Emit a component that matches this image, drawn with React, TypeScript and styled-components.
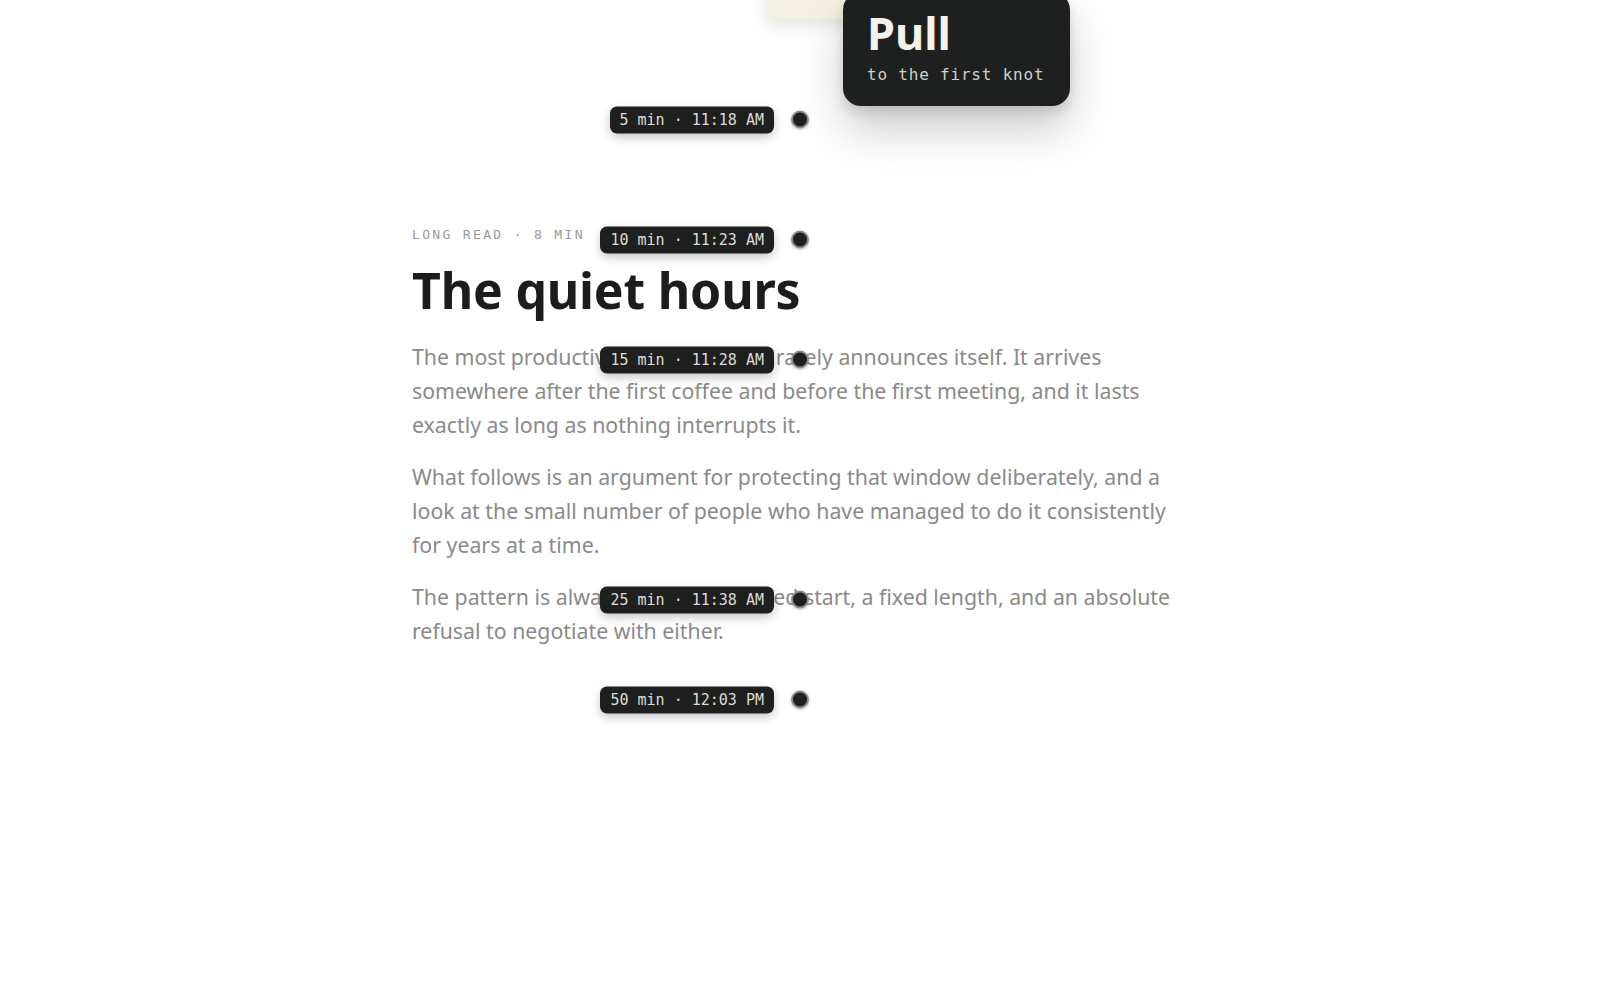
import React, { FC } from 'react'
import styled, { createGlobalStyle } from 'styled-components'

const GlobalStyle = createGlobalStyle`
  html, body {
    margin: 0;
    padding: 0;
    background: #ffffff;
  }
  body {
    font-family: "Noto Sans", "Open Sans", sans-serif;
    -webkit-font-smoothing: antialiased;
  }
`

const mono = `"DejaVu Sans Mono", "Liberation Mono", monospace`

const Page = styled.div`
  position: relative;
  width: 776px;
  min-height: 1000px;
  margin: 0 auto;
`

const Article = styled.article`
  width: 776px;
  padding-top: 225px;
`

const Kicker = styled.div`
  font-family: ${mono};
  font-size: 13px;
  line-height: 20px;
  letter-spacing: 0.18em;
  color: #9a9a9a;
  text-transform: uppercase;
`

const Title = styled.h1`
  margin: 18px 0 0;
  font-size: 50px;
  line-height: 55px;
  font-weight: 700;
  letter-spacing: -0.2px;
  color: #1b1c1b;
`

const Para = styled.p`
  margin: 22px 0 0;
  font-size: 21.3px;
  line-height: 34px;
  color: #8a8a8a;
  & + & {
    margin-top: 18px;
  }
`

// cream tab peeking out from behind the card
const Handle = styled.div`
  position: absolute;
  left: 354px;
  top: -20px;
  width: 100px;
  height: 39px;
  border-radius: 10px;
  background: #f4f1e4;
  box-shadow: 0 6px 18px rgba(0, 0, 0, 0.12);
  z-index: 1;
`

const PullCard = styled.div`
  position: absolute;
  left: 431px;
  top: -8px;
  width: 227px;
  height: 114px;
  box-sizing: border-box;
  padding: 18px 24px 0;
  border-radius: 18px;
  background: #1e201f;
  box-shadow: 0 24px 44px rgba(0, 0, 0, 0.2), 0 6px 12px rgba(0, 0, 0, 0.12);
  z-index: 2;
`

const PullTitle = styled.div`
  font-size: 45px;
  line-height: 45px;
  font-weight: 700;
  color: #f4f1e8;
`

const PullSub = styled.div`
  margin-top: 10px;
  font-family: ${mono};
  font-size: 16px;
  line-height: 20px;
  letter-spacing: 0.8px;
  white-space: nowrap;
  color: #d2cfc6;
`

const Knot = styled.div`
  position: absolute;
  left: 0;
  width: 397px;
  height: 27px;
  display: flex;
  align-items: center;
  justify-content: flex-end;
  gap: 17px;
  z-index: 3;
  transform: translateY(-50%);
`

const Tag = styled.span`
  height: 27px;
  display: inline-flex;
  align-items: center;
  padding: 0 10px;
  border-radius: 7px;
  background: #1e201f;
  color: #dedbd3;
  font-family: ${mono};
  font-size: 15px;
  white-space: nowrap;
  box-shadow: 0 4px 10px rgba(0, 0, 0, 0.22);
`

const Dot = styled.span`
  width: 14px;
  height: 14px;
  border-radius: 50%;
  background: #1e201f;
  border: 2px solid #8c8c8c;
  box-shadow: 0 1px 3px rgba(0, 0, 0, 0.25);
  flex: none;
`

const knots = [
  { top: 119.5, label: '5 min · 11:18 AM' },
  { top: 239.5, label: '10 min · 11:23 AM' },
  { top: 359.5, label: '15 min · 11:28 AM' },
  { top: 599.5, label: '25 min · 11:38 AM' },
  { top: 699.5, label: '50 min · 12:03 PM' },
]

const App: FC = () => {
  return (
    <>
      <GlobalStyle />
      <Page>
        <Handle />
        <PullCard>
          <PullTitle>Pull</PullTitle>
          <PullSub>to the first knot</PullSub>
        </PullCard>

        {knots.map(k => (
          <Knot key={k.label} style={{ top: k.top }}>
            <Tag>{k.label}</Tag>
            <Dot />
          </Knot>
        ))}

        <Article>
          <Kicker>Long read · 8 min</Kicker>
          <Title>The quiet hours</Title>
          <Para>
            The most productive part of the day rarely announces itself. It arrives
            somewhere after the first coffee and before the first meeting, and it lasts
            exactly as long as nothing interrupts it.
          </Para>
          <Para>
            What follows is an argument for protecting that window deliberately, and a
            look at the small number of people who have managed to do it consistently
            for years at a time.
          </Para>
          <Para>
            The pattern is always the same: a fixed start, a fixed length, and an absolute
            refusal to negotiate with either.
          </Para>
        </Article>
      </Page>
    </>
  )
}

export default App
